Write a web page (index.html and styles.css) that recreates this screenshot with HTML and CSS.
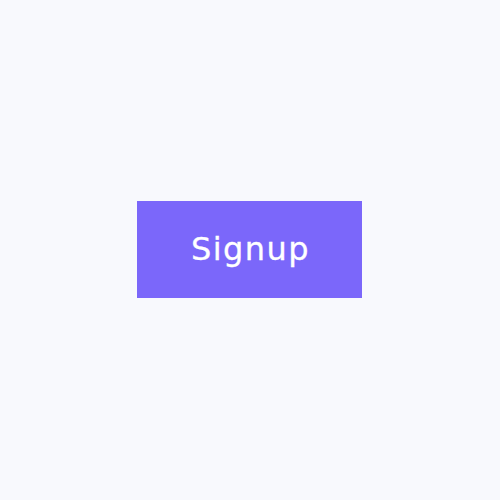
FILE: index.html
```html
<!DOCTYPE html>
<html>
<head>
<meta charset="utf-8">
<link rel="stylesheet" href="styles.css">
</head>
<body>
<main class="page">
  <button class="signup"><span class="label">Signup</span></button>
</main>
</body>
</html>
```
FILE: styles.css
```css
html, body {
  margin: 0;
  padding: 0;
  background: #f8f9fd;
}
.page {
  width: 500px;
  height: 500px;
  display: flex;
  align-items: center;
  justify-content: center;
}
.signup {
  width: 225px;
  height: 97px;
  margin-top: -1px;
  margin-left: -1px;
  border: none;
  background: #7b67fa;
  color: #ffffff;
  font-family: "DejaVu Sans", "Inter", sans-serif;
  font-size: 32px;
  font-weight: 400;
  padding: 0 0 0 2px;
  letter-spacing: 1.4px;
  -webkit-text-stroke: 0.3px #ffffff;
  cursor: pointer;
}
.label {
  position: relative;
  top: -1px;
}
```
